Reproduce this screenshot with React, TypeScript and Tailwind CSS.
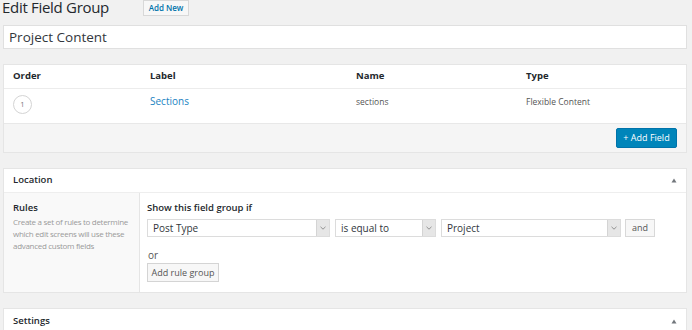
import React from "react";

const font = { fontFamily: '"Open Sans", "Noto Sans", sans-serif' };

function Select({ w, label }: { w: string; label: string }) {
  return (
    <div className={`${w} h-[18px] flex border border-[#dcdcdc] bg-white`}>
      <div className="flex-1 text-[10px] leading-[16px] pl-[5px] text-[#32373c]">{label}</div>
      <div className="w-[13px] bg-[#e6e6e6] border-l border-[#d4d4d4] flex items-center justify-center">
        <svg width="6" height="4" viewBox="0 0 6 4">
          <path d="M0.5 0.8 L3 3.2 L5.5 0.8" fill="none" stroke="#888" strokeWidth="0.9" />
        </svg>
      </div>
    </div>
  );
}

function Tri() {
  return (
    <svg width="6" height="5" viewBox="0 0 6 5">
      <path d="M3 0.5 L5.5 4.5 L0.5 4.5 Z" fill="#72777c" />
    </svg>
  );
}

export default function App() {
  return (
    <div style={font} className="w-[692px] h-[330px] overflow-hidden bg-[#f1f1f1] text-[#32373c]">
      <div className="flex items-center pl-[2px] -mt-[4px] h-[22px]">
        <div className="text-[15px] leading-[20px] text-[#23282d] tracking-[-0.3px]">Edit Field Group</div>
        <div className="ml-[34px] mt-[2px] h-[16px] w-[46px] border border-[#d8d8d8] bg-[#f7f7f7] text-[#0073aa] text-[8px] font-semibold leading-[14px] text-center">
          Add New
        </div>
      </div>

      <div className="ml-[3px] mr-[5px] mt-[7px] h-[24px] bg-white border border-[#e0e0e0] text-[13.5px] leading-[22px] pl-[5px] text-[#32373c]">
        Project Content
      </div>

      {/* Fields panel */}
      <div className="ml-[3px] mr-[5px] mt-[15px] bg-white border border-[#e5e5e5]">
        <div className="flex h-[24px] items-center border-b border-[#ececec] text-[9.5px] font-bold text-[#23282d] pl-[9px]">
          <div className="w-[137px]">Order</div>
          <div className="w-[206px]">Label</div>
          <div className="w-[170px]">Name</div>
          <div>Type</div>
        </div>
        <div className="flex h-[34px] pl-[9px] text-[8.5px]">
          <div className="w-[137px] pt-[6px]">
            <div className="w-[19px] h-[19px] rounded-full border border-[#d4d4d4] flex items-center justify-center text-[7.5px] text-[#777]">1</div>
          </div>
          <div className="w-[206px] pt-[5px] text-[10px] font-medium text-[#1a83c2]">Sections</div>
          <div className="w-[170px] pt-[7px] text-[#555]">sections</div>
          <div className="pt-[7px] text-[#555]">Flexible Content</div>
        </div>
        <div className="h-[29px] bg-[#f5f5f5] border-t border-[#e8e8e8] flex items-center justify-end pr-[9px]">
          <div className="w-[61px] h-[20px] bg-[#0085ba] border border-[#0073aa] rounded-[2px] text-white text-[9px] leading-[18px] text-center">
            + Add Field
          </div>
        </div>
      </div>

      {/* Location panel */}
      <div className="ml-[3px] mr-[5px] mt-[15px] bg-white border border-[#e5e5e5]">
        <div className="h-[24px] flex items-center justify-between border-b border-[#eeeeee] pl-[9px] pr-[9px]">
          <div className="text-[9.5px] font-semibold text-[#23282d]">Location</div>
          <Tri />
        </div>
        <div className="flex">
          <div className="w-[136px] h-[99px] bg-[#f9f9f9] border-r border-[#e5e5e5] pl-[9px] pt-[9px]">
            <div className="text-[9.5px] font-semibold text-[#23282d] leading-[12px]">Rules</div>
            <div className="text-[8px] tracking-[-0.3px] leading-[12px] text-[#999] mt-[2px] whitespace-nowrap">
              Create a set of rules to determine
              <br />
              which edit screens will use these
              <br />
              advanced custom fields
            </div>
          </div>
          <div className="flex-1 pl-[7px] pt-[9px]">
            <div className="text-[9.5px] font-semibold leading-[12px] text-[#23282d]">Show this field group if</div>
            <div className="flex items-center mt-[5px]">
              <Select w="w-[183px]" label="Post Type" />
              <Select w="w-[101px] ml-[5px]" label="is equal to" />
              <Select w="w-[180px] ml-[5px]" label="Project" />
              <div className="ml-[4px] w-[30px] h-[18px] border border-[#d8d8d8] bg-[#f7f7f7] text-[9px] leading-[16px] text-center text-[#555]">
                and
              </div>
            </div>
            <div className="text-[10px] text-[#555] mt-[12px] leading-[12px] pl-[1px]">or</div>
            <div className="mt-[2px] w-[72px] h-[19px] border border-[#d4d4d4] bg-[#f7f7f7] text-[9px] leading-[17px] text-center text-[#555]">
              Add rule group
            </div>
          </div>
        </div>
      </div>

      {/* Settings panel */}
      <div className="ml-[3px] mr-[5px] mt-[15px] bg-white border border-[#e5e5e5]">
        <div className="h-[24px] flex items-center justify-between pl-[9px] pr-[9px]">
          <div className="text-[9.5px] font-semibold text-[#23282d]">Settings</div>
          <Tri />
        </div>
      </div>
    </div>
  );
}
